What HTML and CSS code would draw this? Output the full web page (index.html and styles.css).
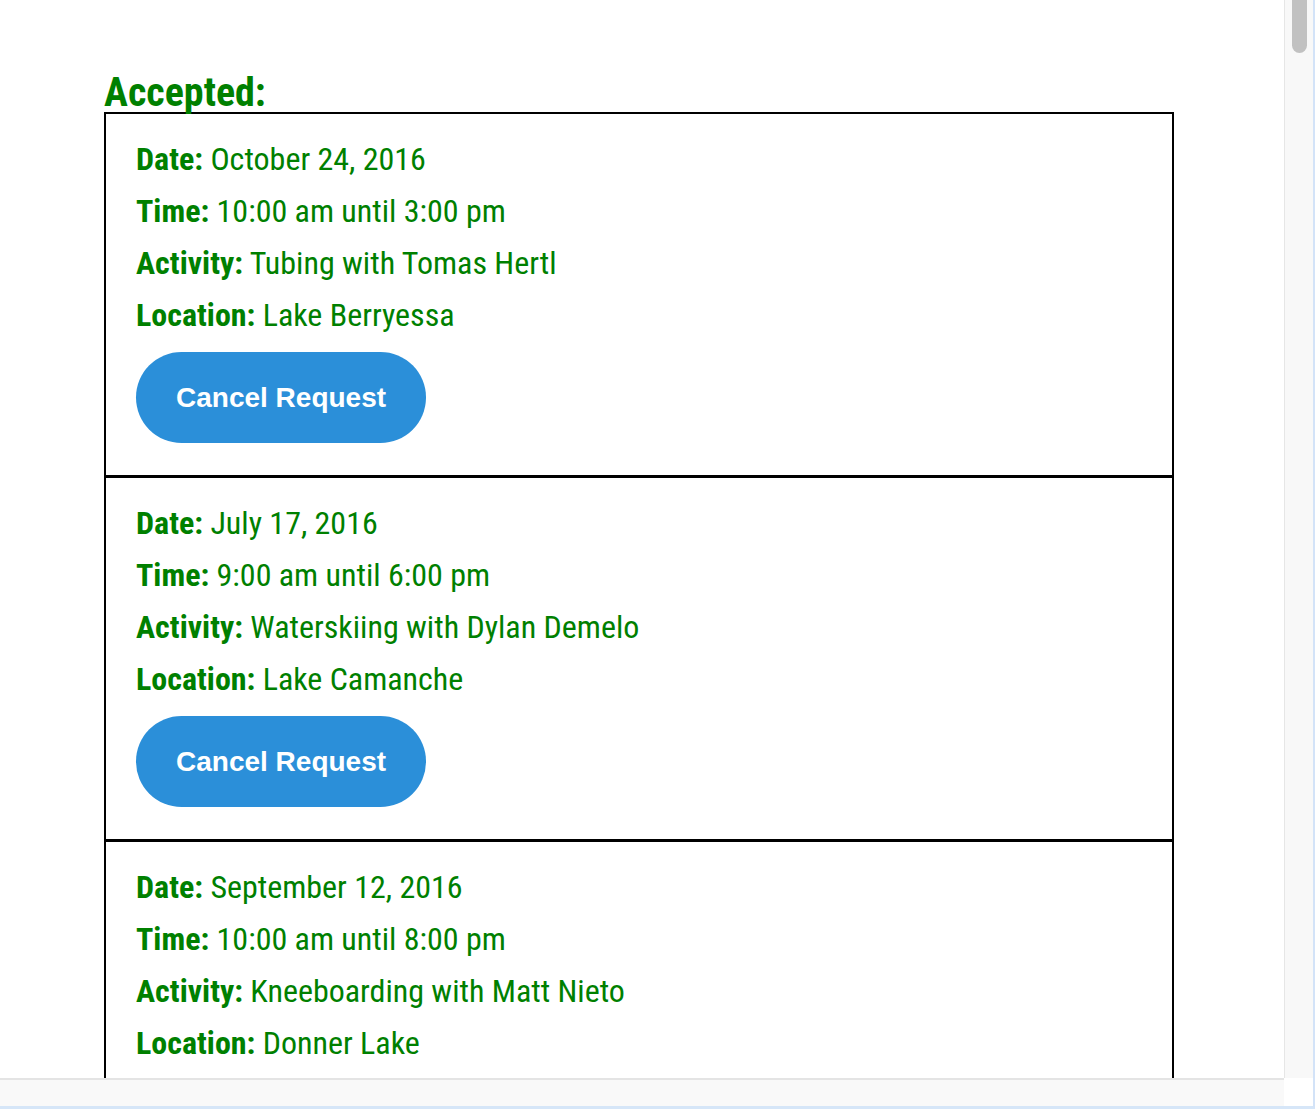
FILE: index.html
```html
<!DOCTYPE html>
<html>
<head>
<meta charset="utf-8">
<link rel="stylesheet" href="styles.css">
</head>
<body>
<div class="window">
  <div class="viewport">
    <main class="page">
      <h2 class="heading">Accepted:</h2>
      <section class="card">
        <p class="row"><b>Date:</b> October 24, 2016</p>
        <p class="row"><b>Time:</b> 10:00 am until 3:00 pm</p>
        <p class="row"><b>Activity:</b> Tubing with Tomas Hertl</p>
        <p class="row"><b>Location:</b> Lake Berryessa</p>
        <button class="cancel">Cancel Request</button>
      </section>
      <section class="card">
        <p class="row"><b>Date:</b> July 17, 2016</p>
        <p class="row"><b>Time:</b> 9:00 am until 6:00 pm</p>
        <p class="row"><b>Activity:</b> Waterskiing with Dylan Demelo</p>
        <p class="row"><b>Location:</b> Lake Camanche</p>
        <button class="cancel">Cancel Request</button>
      </section>
      <section class="card">
        <p class="row"><b>Date:</b> September 12, 2016</p>
        <p class="row"><b>Time:</b> 10:00 am until 8:00 pm</p>
        <p class="row"><b>Activity:</b> Kneeboarding with Matt Nieto</p>
        <p class="row"><b>Location:</b> Donner Lake</p>
        <button class="cancel">Cancel Request</button>
      </section>
    </main>
  </div>
  <div class="vscroll"><div class="vthumb"></div></div>
  <div class="hscroll"></div>
  <div class="corner"></div>
</div>
</body>
</html>
```
FILE: styles.css
```css
html, body {
  margin: 0;
  padding: 0;
  background: #ffffff;
}
body {
  width: 1315px;
  height: 1109px;
  overflow: hidden;
}
.window {
  display: grid;
  grid-template-columns: 1284px 31px;
  grid-template-rows: 1078px 31px;
  width: 1315px;
  height: 1109px;
}
.viewport {
  overflow: hidden;
  background: #ffffff;
}
.page {
  padding-left: 104px;
  width: 1070px;
  font-family: "Roboto Condensed", Roboto, "Liberation Sans", sans-serif;
  font-stretch: 75%;
  color: #008000;
}
.heading {
  margin: 74px 0 0 0;
  font-size: 40px;
  line-height: 38px;
  font-weight: 700;
}
.card {
  border: 2px solid #000000;
  border-bottom-width: 1px;
  padding: 19px 30px 0;
  height: 342px;
  box-sizing: content-box;
}
.row {
  margin: 0;
  font-size: 32px;
  line-height: 52px;
  font-weight: 400;
}
.row b {
  font-weight: 700;
}
.cancel {
  display: block;
  margin-top: 11px;
  height: 91px;
  padding: 0 40px;
  border: none;
  border-radius: 46px;
  background: #2b8fd9;
  color: #ffffff;
  font-family: "Liberation Sans", Arial, sans-serif;
  font-weight: 700;
  font-size: 28px;
  cursor: pointer;
}
.vscroll {
  background: #f8f8f8;
  border-left: 1px solid #e6e6e6;
  border-right: 2px solid #d3e3f8;
  display: flex;
  justify-content: flex-start;
  padding-left: 7px;
}
.vthumb {
  width: 15px;
  height: 53px;
  background: #c1c1c1;
  border-radius: 0 0 8px 8px;
}
.hscroll {
  background: #f9f9f9;
  border-top: 2px solid #e4e4e4;
  border-bottom: 3px solid #d6e6f8;
}
.corner {
  background: #ffffff;
  border-bottom: 3px solid #d6e6f8;
  border-right: 2px solid #d3e3f8;
}
```
